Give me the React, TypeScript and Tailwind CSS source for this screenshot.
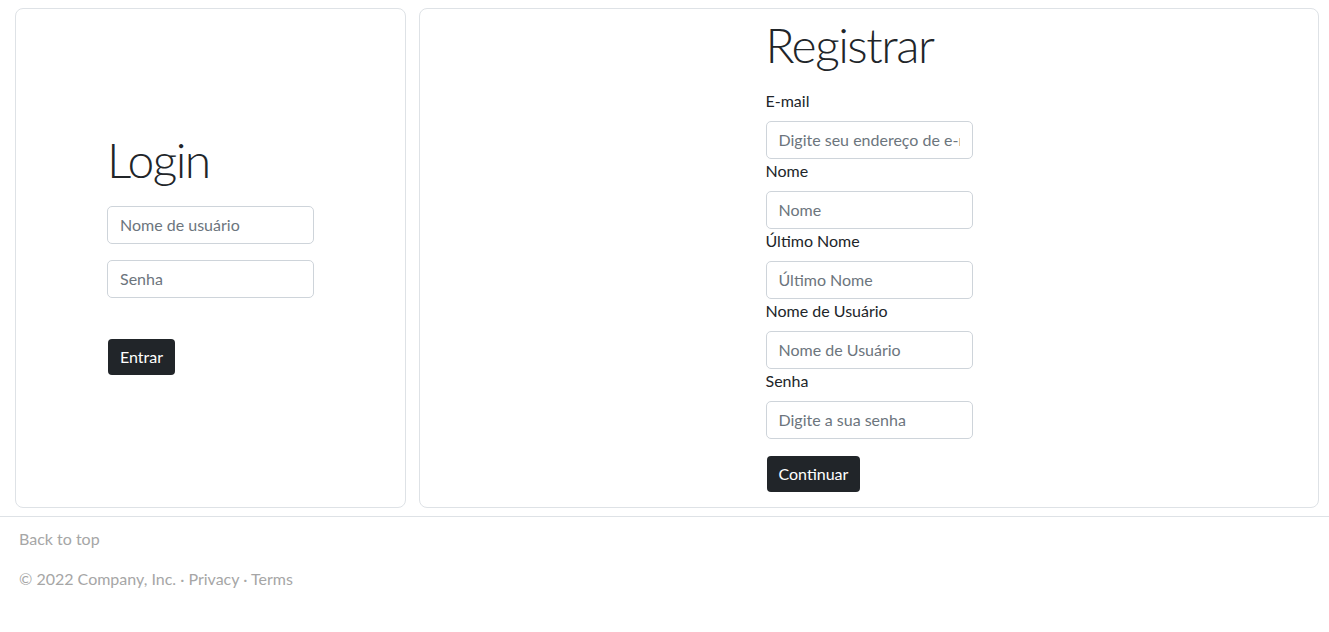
const font = { fontFamily: 'Lato, "Noto Sans", sans-serif' };

function Field({ label, placeholder, type = "text" }: { label: string; placeholder: string; type?: string }) {
  return (
    <div className="flex flex-col">
      <label className="mb-[8px] text-[16px] leading-[24px] text-[#212529]">{label}</label>
      <input
        type={type}
        placeholder={placeholder}
        className="box-border h-[38px] w-[207px] rounded-[5px] border border-[#ced4da] bg-white px-[12px] text-[16px] text-[#212529] outline-none placeholder:text-[#6c757d]"
      />
    </div>
  );
}

export default function App() {
  return (
    <div className="min-h-[632px] bg-white text-[#212529]" style={font}>
      <div className="flex gap-[13px] pl-[15px] pr-[10px] pt-[8px]">
        <div className="box-border flex h-[500px] w-[391px] shrink-0 justify-center rounded-lg border border-[#dee2e6] pt-[122px]">
          <div className="flex w-[207px] flex-col">
            <h1 className="mb-[17px] text-[48px] font-light leading-[57.6px] tracking-[-1.5px]">Login</h1>
            <input
              type="text"
              placeholder="Nome de usuário"
              className="box-border h-[38px] w-[207px] rounded-[5px] border border-[#ced4da] bg-white px-[12px] text-[16px] outline-none placeholder:text-[#6c757d]"
            />
            <input
              type="password"
              placeholder="Senha"
              className="mt-[16px] box-border h-[38px] w-[207px] rounded-[5px] border border-[#ced4da] bg-white px-[12px] text-[16px] outline-none placeholder:text-[#6c757d]"
            />
            <div className="mt-[41px]">
              <button className="ml-[1px] h-[36px] rounded-[4px] bg-[#212529] px-[12px] text-[16px] text-white">Entrar</button>
            </div>
          </div>
        </div>
        <div className="box-border flex h-[500px] flex-1 justify-center rounded-lg border border-[#dee2e6] pt-[7px]">
          <div className="flex w-[207px] flex-col">
            <h1 className="mb-[15px] text-[48px] font-light leading-[57.6px] tracking-[-1.5px]">Registrar</h1>
            <Field label="E-mail" placeholder="Digite seu endereço de e-mail" type="email" />
            <Field label="Nome" placeholder="Nome" />
            <Field label="Último Nome" placeholder="Último Nome" />
            <Field label="Nome de Usuário" placeholder="Nome de Usuário" />
            <Field label="Senha" placeholder="Digite a sua senha" type="password" />
            <div className="mt-[17px]">
              <button className="ml-[1px] h-[36px] rounded-[4px] bg-[#212529] px-[12px] text-[16px] text-white">Continuar</button>
            </div>
          </div>
        </div>
      </div>
      <footer className="mt-[8px] border-t border-[#dee2e6] pl-[19px] pt-[10px] text-[16px] leading-[24px] text-[#a6a6a6]">
        <p className="mb-[16px]">
          <a href="#" className="text-[#a6a6a6]">Back to top</a>
        </p>
        <p>
          © 2022 Company, Inc. · <a href="#" className="text-[#a6a6a6]">Privacy</a> · <a href="#" className="text-[#a6a6a6]">Terms</a>
        </p>
      </footer>
    </div>
  );
}
